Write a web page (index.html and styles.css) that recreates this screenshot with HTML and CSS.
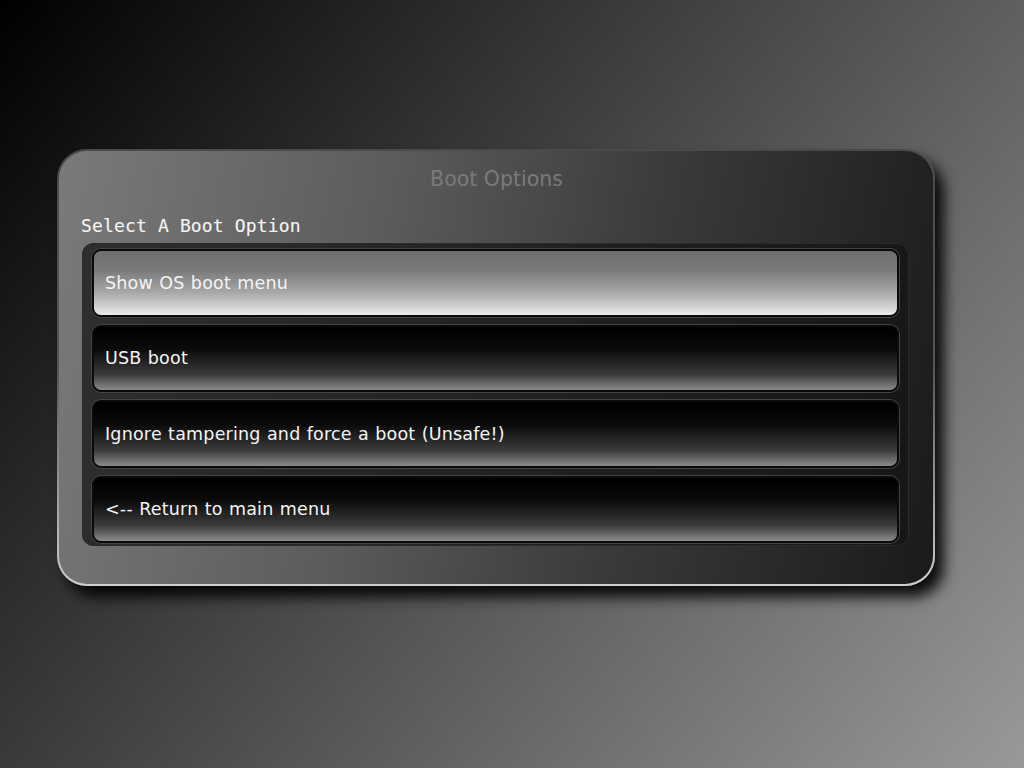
FILE: index.html
```html
<!DOCTYPE html>
<html>
<head>
<meta charset="utf-8">
<title>Boot Options</title>
<link rel="stylesheet" href="styles.css">
</head>
<body>
<div class="screen">
  <div class="panel">
    <div class="title">Boot Options</div>
    <div class="prompt">Select A Boot Option</div>
    <div class="list">
      <div class="item selected"><span>Show OS boot menu</span></div>
      <div class="item"><span>USB boot</span></div>
      <div class="item"><span>Ignore tampering and force a boot (Unsafe!)</span></div>
      <div class="item"><span>&lt;-- Return to main menu</span></div>
    </div>
  </div>
</div>
</body>
</html>
```

FILE: styles.css
```css
html, body {
  margin: 0;
  padding: 0;
  width: 1024px;
  height: 768px;
  overflow: hidden;
}

body {
  background: linear-gradient(129deg, #000000 0%, #999999 100%);
}

.screen {
  width: 1024px;
  height: 768px;
  padding: 149px 0 0 57px;
  box-sizing: border-box;
}

.panel {
  width: 878px;
  height: 437px;
  box-sizing: border-box;
  border: 2px solid transparent;
  border-radius: 30px;
  background:
    linear-gradient(100deg, #7a7a7a 0%, #5c5c5c 35%, #3a3a3a 65%, #1a1a1a 100%) padding-box,
    linear-gradient(to bottom, #4a4a4a 0%, #555555 50%, #cfcfcf 100%) border-box;
  box-shadow: 9px 11px 14px rgba(0, 0, 0, 0.9);
  padding: 14px 24px 0 23px;
  display: flex;
  flex-direction: column;
}

.title {
  font-family: "DejaVu Sans", sans-serif;
  font-size: 20.5px;
  line-height: 28px;
  color: #7a7a7a;
  text-align: center;
  padding-left: 2px;
}

.prompt {
  margin-top: 23px;
  margin-left: -1px;
  font-family: "DejaVu Sans Mono", monospace;
  font-size: 18px;
  letter-spacing: 0.15px;
  line-height: 20px;
  color: #f6f6f6;
  -webkit-text-stroke: 0.1px #f6f6f6;
}

.list {
  margin-top: 7px;
  height: 303px;
  box-sizing: border-box;
  background: linear-gradient(100deg, #2e2e2e 0%, #222222 50%, #161616 100%);
  border-radius: 12px;
  box-shadow: inset 0 0 0 1px #2a2a2a;
  padding: 6px 10px 3px 10px;
  display: flex;
  flex-direction: column;
  gap: 8px;
}

.item {
  flex: 1;
  box-sizing: border-box;
  border: 2px solid #0a0a0a;
  border-radius: 9px;
  box-shadow: 0 0 0 1px #444444;
  background: linear-gradient(to bottom, #000000 0%, #0a0a0a 35%, #3a3a3a 75%, #8a8a8a 100%);
  display: flex;
  align-items: center;
  padding-left: 11px;
  font-family: "DejaVu Sans", sans-serif;
  font-size: 17.5px;
  letter-spacing: 0.2px;
  word-spacing: 0.5px;
  color: #f4f4f4;
}

.item.selected {
  background: linear-gradient(to bottom, #6e6e6e 0%, #7a7a7a 30%, #a8a8a8 65%, #ececec 100%);
}
```
